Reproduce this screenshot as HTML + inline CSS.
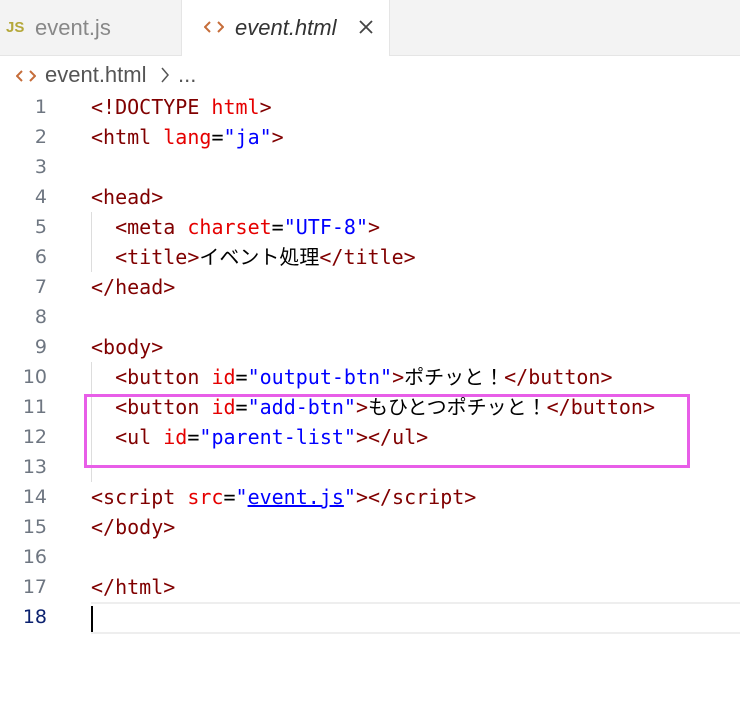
<!DOCTYPE html>
<html><head><meta charset="utf-8"><style>
body{margin:0;width:740px;height:720px;background:#fff;overflow:hidden;position:relative;font-family:"DejaVu Sans Mono","Noto Sans CJK JP",monospace;}
.tabs{position:absolute;left:0;top:0;width:740px;height:55px;background:#f3f3f3;border-bottom:1px solid #e5e5e5;}
.tab{position:absolute;top:0;height:55px;font-family:"Liberation Sans",sans-serif;font-size:22px;line-height:55px;}
.t1{left:0;width:180px;color:#888;}
.t2{left:181px;width:207px;background:#fff;border-left:1px solid #e5e5e5;border-right:1px solid #e5e5e5;height:56px;color:#333;font-style:italic;}
.crumb{position:absolute;left:0;top:60px;height:30px;line-height:30px;font-family:"Liberation Sans",sans-serif;font-size:22px;color:#555;}
.ln{position:absolute;left:0;width:47px;text-align:right;font-size:19px;line-height:30px;height:30px;color:#6e7681;font-family:"DejaVu Sans",sans-serif;}
.cd{position:absolute;left:91px;font-size:20px;line-height:30px;height:30px;white-space:pre;color:#000;}
.t{color:#800000}.a{color:#e50000}.v{color:#0000ff}
</style></head><body>
<div class="tabs">
 <div class="tab t1"><span style="position:absolute;left:6px;color:#b5a83a;font-weight:bold;font-size:15px;font-style:normal">JS</span><span style="position:absolute;left:35px">event.js</span></div>
 <div class="tab t2">
  <svg style="position:absolute;left:22px;top:20px" width="20" height="14" viewBox="0 0 20 14"><path d="M6 2L1 7l5 5M14 2l5 5-5 5" fill="none" stroke="#c66d3a" stroke-width="2"/></svg>
  <span style="position:absolute;left:53px">event.html</span>
  <svg style="position:absolute;left:176px;top:19px" width="16" height="16" viewBox="0 0 16 16"><path d="M2 2l12 12M14 2L2 14" stroke="#444" stroke-width="1.8"/></svg>
 </div>
</div>
<div class="crumb">
 <svg style="position:absolute;left:16px;top:9px" width="20" height="14" viewBox="0 0 20 14"><path d="M6 2L1 7l5 5M14 2l5 5-5 5" fill="none" stroke="#c66d3a" stroke-width="2"/></svg>
 <span style="position:absolute;left:45px;white-space:nowrap">event.html</span>
 <svg style="position:absolute;left:160px;top:7px" width="10" height="16" viewBox="0 0 10 16"><path d="M2 1l6 7-6 7" fill="none" stroke="#555" stroke-width="1.5"/></svg>
 <span style="position:absolute;left:178px;white-space:nowrap">...</span>
</div>
<div style="position:absolute;left:91px;top:602px;width:649px;height:28px;border-top:2px solid #eee;border-bottom:2px solid #eee"></div>
<div style="position:absolute;left:91px;top:606px;width:2px;height:26px;background:#000"></div>
<div style="position:absolute;left:91px;top:212px;width:1px;height:60px;background:#ddd"></div>
<div style="position:absolute;left:91px;top:362px;width:1px;height:120px;background:#ddd"></div>
<div style="position:absolute;left:84px;top:394px;width:600px;height:68px;border:3px solid #e85ee8"></div>
<div id="c"></div>
<script>
var L=['<span class="t">&lt;!DOCTYPE</span> <span class="a">html</span><span class="t">&gt;</span>',
'<span class="t">&lt;html</span> <span class="a">lang</span>=<span class="v">"ja"</span><span class="t">&gt;</span>','',
'<span class="t">&lt;head&gt;</span>',
'  <span class="t">&lt;meta</span> <span class="a">charset</span>=<span class="v">"UTF-8"</span><span class="t">&gt;</span>',
'  <span class="t">&lt;title&gt;</span>イベント処理<span class="t">&lt;/title&gt;</span>',
'<span class="t">&lt;/head&gt;</span>','',
'<span class="t">&lt;body&gt;</span>',
'  <span class="t">&lt;button</span> <span class="a">id</span>=<span class="v">"output-btn"</span><span class="t">&gt;</span>ポチッと！<span class="t">&lt;/button&gt;</span>',
'  <span class="t">&lt;button</span> <span class="a">id</span>=<span class="v">"add-btn"</span><span class="t">&gt;</span>もひとつポチッと！<span class="t">&lt;/button&gt;</span>',
'  <span class="t">&lt;ul</span> <span class="a">id</span>=<span class="v">"parent-list"</span><span class="t">&gt;&lt;/ul&gt;</span>','',
'<span class="t">&lt;script</span> <span class="a">src</span>=<span class="v">"<u>event.js</u>"</span><span class="t">&gt;&lt;/script&gt;</span>',
'<span class="t">&lt;/body&gt;</span>','',
'<span class="t">&lt;/html&gt;</span>',''];
var h='';for(var i=0;i<18;i++){var y=92+30*i;h+='<div class="ln" style="top:'+y+'px'+(i==17?';color:#0b216f':'')+'">'+(i+1)+'</div><div class="cd" style="top:'+y+'px">'+L[i]+'</div>';}
document.getElementById('c').innerHTML=h;
</script>
</body></html>
